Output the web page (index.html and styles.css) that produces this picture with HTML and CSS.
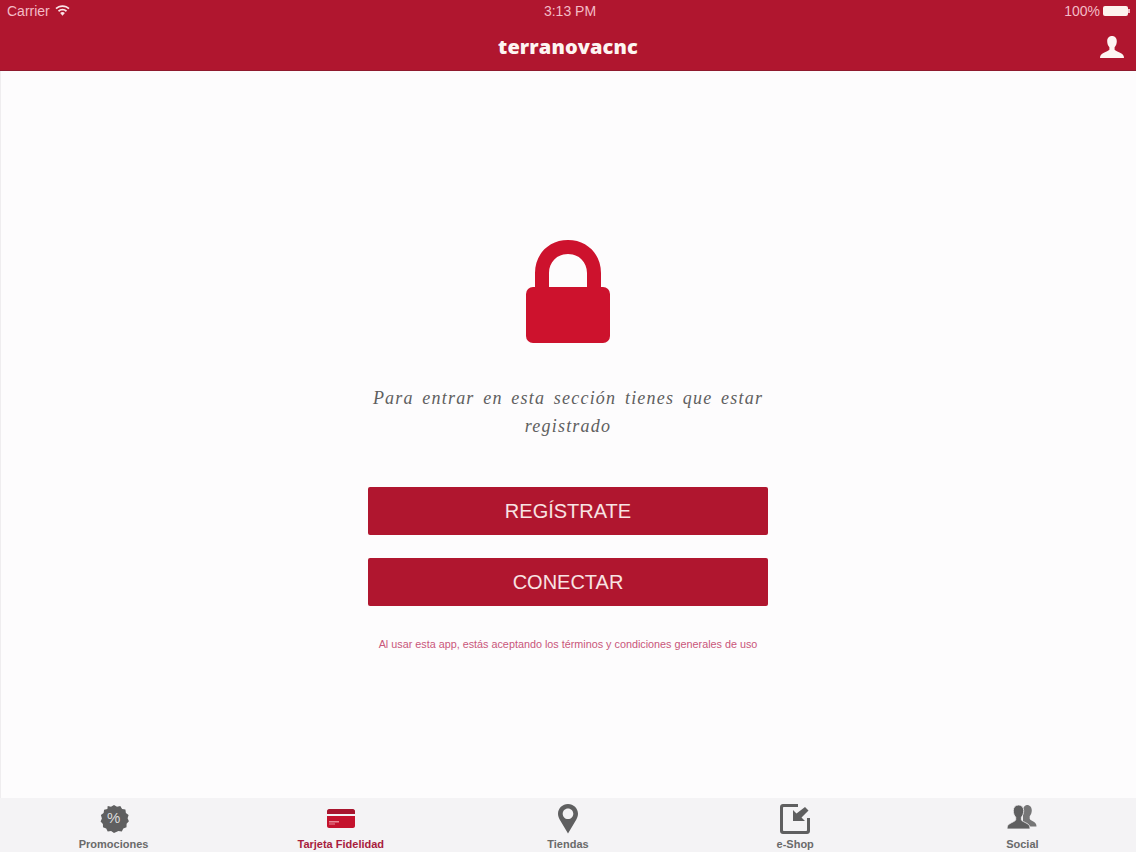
FILE: index.html
```html
<!DOCTYPE html>
<html lang="es">

<head>
    <meta charset="UTF-8">
    <meta name="viewport" content="width=device-width, initial-scale=1.0">
    <title>terranovacnc</title>
    <link rel="stylesheet" href="styles.css">
</head>

<body>
    <div class="app">
        <header class="header">
            <div class="status-bar">
                <div class="status-left">
                    <span>Carrier</span>
                    <svg class="wifi" viewBox="0 0 14 10" width="15" height="11">
                        <path d="M7 0C4.400 0 2.100 1 .4 2.700l1.200 1.200C3 2.500 4.900 1.700 7 1.700s4 .8 5.400 2.200l1.200-1.200C11.900 1 9.600 0 7 0z" />
                        <path d="M7 3.300c-1.700 0-3.200.7-4.300 1.800l1.200 1.200C4.700 5.500 5.800 5 7 5s2.300.5 3.100 1.300l1.200-1.200C10.200 4 8.700 3.300 7 3.300z" />
                        <path d="M7 6.500c-.9 0-1.600.3-2.200.9L7 9.800l2.200-2.400c-.6-.6-1.300-.9-2.200-.9z" />
                    </svg>
                </div>
                <div class="status-time">3:13 PM</div>
                <div class="status-right">
                    <span>100%</span>
                    <div class="battery">
                        <div class="battery-fill"></div>
                    </div>
                </div>
            </div>
            <div class="nav-bar">
                <div class="logo">terranovacnc</div>
                <svg class="user-icon" viewBox="0 0 24 22" width="24" height="22">
                    <path d="M12 0c3 0 4.800 2.200 4.800 5.200 0 2.400-.9 4.700-2.200 6v2.200c0 1 4 2.400 6.400 3.800 1.600.9 3 2 3 4.800H0c0-2.800 1.400-3.900 3-4.800 2.400-1.400 6.400-2.800 6.400-3.800v-2.200c-1.300-1.300-2.200-3.600-2.200-6C7.200 2.200 9 0 12 0z" />
                </svg>
            </div>
        </header>

        <main class="content">
            <svg class="lock" viewBox="0 0 84 103" width="84" height="103">
                <path d="M9 50V33C9 14 23 0 42 0s33 14 33 33v17H61V33c0-11-8-19-19-19s-19 8-19 19v17z" />
                <rect x="0" y="47" width="84" height="56" rx="7" />
            </svg>
            <p class="message">Para entrar en esta sección tienes que estar registrado</p>
            <button class="btn btn-first">REGÍSTRATE</button>
            <button class="btn">CONECTAR</button>
            <p class="terms">Al usar esta app, estás aceptando los términos y condiciones generales de uso</p>
        </main>

        <nav class="tabs">
            <div class="tab">
                <svg class="tab-icon" viewBox="0 0 30 30" width="30" height="30">
                    <path d="M15 1l3 1.800 3.300-.8 1.800 2.900 3.300.7.500 3.400 2.700 2-1 3.300 1.300 3-2.300 2.500-.1 3.400-3.200 1.200-1.500 3-3.400-.4L15 29l-2.900-1.900-3.400.4-1.500-3-3.200-1.200-.1-3.400-2.300-2.500 1.300-3-1-3.300 2.700-2 .5-3.400 3.300-.7L8.700 2l3.300.8z" />
                </svg>
                <span class="percent">%</span>
                <span class="tab-label">Promociones</span>
            </div>
            <div class="tab tab-active">
                <svg class="tab-icon" viewBox="0 0 30 30" width="30" height="30">
                    <path d="M3 5h24c1 0 2 1 2 2v3H1V7c0-1 1-2 2-2z" />
                    <path class="card-body" d="M1 12h28v10c0 1-1 2-2 2H3c-1 0-2-1-2-2z" />
                    <rect class="card-mark" x="3" y="17" width="10" height="1.500" />
                    <rect class="card-mark" x="3" y="19.500" width="6" height="1" />
                </svg>
                <span class="tab-label">Tarjeta Fidelidad</span>
            </div>
            <div class="tab">
                <svg class="tab-icon" viewBox="0 0 30 30" width="30" height="30">
                    <path fill-rule="evenodd" d="M15 0c5.500 0 10 4.300 10 9.800 0 2.200-.7 4-1.800 6L15 29.500 6.800 15.800c-1.100-2-1.800-3.800-1.800-6C5 4.300 9.500 0 15 0zm0 4.500c-3 0-5.300 2.400-5.300 5.300S12 15.100 15 15.100s5.300-2.400 5.300-5.300S18 4.500 15 4.500z" />
                </svg>
                <span class="tab-label">Tiendas</span>
            </div>
            <div class="tab">
                <svg class="tab-icon" viewBox="0 0 30 30" width="30" height="30">
                    <path d="M3 0h15v3H4c-.6 0-1 .4-1 1v22c0 .6.4 1 1 1h22c.6 0 1-.4 1-1V14h3v13c0 1.700-1.300 3-3 3H3c-1.700 0-3-1.300-3-3V3C0 1.300 1.300 0 3 0z" />
                    <path d="M25 3l3.500 3.500-7 7 3.500 3.500H13V6l3.500 3.500z" />
                </svg>
                <span class="tab-label">e-Shop</span>
            </div>
            <div class="tab">
                <svg class="tab-icon" viewBox="0 0 30 30" width="30" height="30">
                    <path class="person-back" d="M20 1c3 0 4.800 2.300 4.800 5.300 0 2.400-.9 4.600-2.100 6v2.400c0 1 2.400 2 4 3.100 1.500.9 2.800 2 2.800 4.700h-8.500c-1-1.500-3-2.600-5-3.500V5c.6-2.400 2.800-4 4-4z" />
                    <path class="person-front" d="M11.500 1c3.300 0 5.200 2.400 5.200 5.700 0 2.700-1 5.100-2.300 6.500v2.600c0 1.100 3.300 2.300 5.700 3.700 1.600.9 3 2.100 3 5.500H0c0-3.400 1.400-4.600 3-5.500 2.400-1.400 5.700-2.600 5.700-3.700v-2.600C7.300 11.800 6.300 9.400 6.300 6.700 6.300 3.400 8.200 1 11.500 1z" />
                </svg>
                <span class="tab-label">Social</span>
            </div>
        </nav>
    </div>
</body>

</html>
```

FILE: styles.css
```css
body {
    margin: 0;
    background-color: #fdfcfd;
    font-family: "Liberation Sans", Arial, sans-serif;
}

.app {
    display: flex;
    flex-direction: column;
    height: 852px;
    overflow: hidden;
}

.header {
    background-color: #b0162f;
    border-bottom: 1px solid #8f1a2e;
    height: 70px;
    flex-shrink: 0;
}

.status-bar {
    display: grid;
    grid-template-columns: 1fr auto 1fr;
    align-items: center;
    height: 22px;
    padding: 0 7px;
    font-size: 14px;
    color: #f3bcc6;
}

.status-left {
    display: flex;
    align-items: center;
    gap: 5px;
}

.status-time {
    margin-left: 4px;
}

.wifi {
    fill: #fbe6e9;
    margin-top: -1px;
}

.status-right {
    display: flex;
    align-items: center;
    justify-content: flex-end;
    gap: 3px;
    padding-right: 1px;
}

.battery {
    width: 25px;
    height: 10px;
    border-radius: 2px;
    position: relative;
}

.battery::after {
    content: "";
    position: absolute;
    right: -2px;
    top: 3px;
    width: 2px;
    height: 4px;
    background: #f3bcc6;
}

.battery-fill {
    height: 100%;
    border-radius: 2px;
    background: #fdf3ee;
}

.nav-bar {
    display: flex;
    align-items: center;
    justify-content: center;
    position: relative;
    height: 48px;
}

.logo {
    font-family: "Open Sans", sans-serif;
    font-weight: 800;
    font-size: 20px;
    letter-spacing: 0.1px;
    color: #fdf5f2;
}

.user-icon {
    position: absolute;
    right: 12px;
    top: 14px;
    fill: #fdf5f2;
}

.content {
    flex: 1;
    display: flex;
    flex-direction: column;
    align-items: center;
    padding-top: 169px;
    box-shadow: inset 1px 0 0 #efedef;
}

.lock {
    fill: #cd122d;
}

.message {
    width: 400px;
    margin: 41px 0 47px;
    font-family: "Liberation Serif", serif;
    font-style: italic;
    font-size: 18px;
    line-height: 28px;
    letter-spacing: 1.2px;
    word-spacing: 3px;
    text-align: center;
    color: #5f5f5f;
}

.btn {
    width: 400px;
    height: 48px;
    padding: 0;
    border: none;
    border-radius: 2px;
    background-color: #b0162f;
    color: #f8e3e3;
    font-family: "Liberation Sans", Arial, sans-serif;
    font-size: 20px;
    cursor: pointer;
}

.btn-first {
    margin-bottom: 23px;
}

.terms {
    margin: 32px 0 0;
    font-size: 10.8px;
    line-height: 13px;
    color: #c9567a;
}

.tabs {
    display: grid;
    grid-template-columns: repeat(5, 1fr);
    height: 54px;
    flex-shrink: 0;
    background-color: #f4f3f5;
}

.tab {
    display: flex;
    flex-direction: column;
    align-items: center;
    position: relative;
    padding-top: 6px;
    color: #6a6a6a;
}

.tab-icon {
    fill: #5f5f60;
    flex-shrink: 0;
}

.percent {
    position: absolute;
    top: 11px;
    left: 50%;
    transform: translateX(-50%);
    font-size: 15px;
    color: #dcdcdc;
}

.tab-label {
    margin-top: 4px;
    font-size: 11px;
    line-height: 13px;
    font-weight: 700;
}

.tab-active {
    color: #a81c3d;
}

.tab-active .tab-icon {
    fill: #a8152e;
}

.tab-active .card-body {
    fill: #c4122d;
}

.tab-active .card-mark {
    fill: #e98a98;
}

.person-back {
    opacity: 0.85;
}

.person-front {
    stroke: #f4f3f5;
    stroke-width: 0.8;
}
```
